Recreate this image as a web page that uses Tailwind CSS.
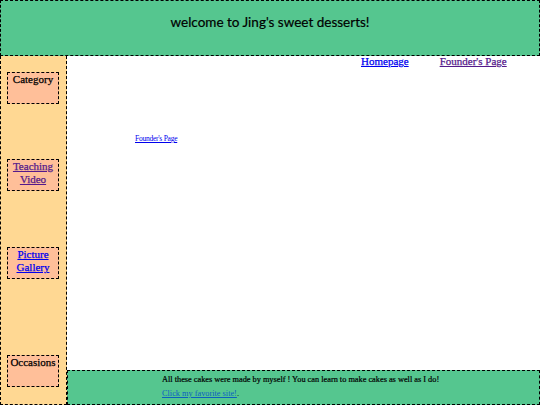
<!DOCTYPE html>
<html lang="en">
<head>
    <meta charset="UTF-8">
    <title>Jing's sweet desserts</title>
    <script src="https://cdn.jsdelivr.net/npm/@tailwindcss/browser@4"></script>
</head>
<body class="bg-white w-[540px] h-[405px] overflow-hidden font-['Liberation_Serif',serif] flex flex-col">
    <!-- Header -->
    <header class="h-[56px] shrink-0 bg-[#55c68f] border border-dashed border-black flex items-center justify-center pb-[11px]">
        <h1 class="font-['Lato',sans-serif] text-[13.5px] text-black [-webkit-text-stroke:0.2px_black]">welcome to Jing's sweet desserts!</h1>
    </header>

    <div class="flex flex-1 min-h-0">
        <!-- Sidebar -->
        <aside class="w-[67px] shrink-0 bg-[#ffd893] border border-t-0 border-dashed border-black flex flex-col pl-[6px] pt-[16px] text-[11px] leading-[13px] [-webkit-text-stroke:0.25px]">
            <div class="w-[52px] h-[32px] bg-[#ffbf99] border border-dashed border-black text-center text-black">Category</div>
            <div class="w-[52px] h-[32px] mt-[55px] bg-[#ffbf99] border border-dashed border-black text-center"><a href="#" class="text-[#551a8b] underline">Teaching Video</a></div>
            <div class="w-[52px] h-[32px] mt-[56px] bg-[#ffbf99] border border-dashed border-black text-center"><a href="#" class="text-[#0000ee] underline">Picture Gallery</a></div>
            <div class="w-[52px] h-[32px] mt-[76px] bg-[#ffbf99] border border-dashed border-black text-center text-black">Occasions</div>
        </aside>

        <!-- Main -->
        <main class="flex-1 flex flex-col min-w-0">
            <nav class="flex h-[78px] shrink-0 pl-[294px] gap-[31px] text-[11px] leading-[11px] [-webkit-text-stroke:0.25px]">
                <a href="#" class="text-[#0000ee] underline">Homepage</a>
                <a href="#" class="text-[#551a8b] underline">Founder's Page</a>
            </nav>
            <div class="flex-1 pl-[68px]">
                <a href="#" class="text-[#0000ee] underline text-[7.5px] tracking-[-0.25px] leading-[9px] block">Founder's Page</a>
            </div>
            <footer class="h-[35px] shrink-0 bg-[#55c68f] border border-dashed border-black pl-[94px] pt-[3px] text-[8.3px] leading-[11px]">
                <p class="text-black [-webkit-text-stroke:0.2px_black]">All these cakes were made by myself ! You can learn to make cakes as well as I do!</p>
                <p class="mt-[3px]"><a href="#" class="text-[#0b5fc0] underline">Click my favorite site!</a>.</p>
            </footer>
        </main>
    </div>
</body>
</html>
